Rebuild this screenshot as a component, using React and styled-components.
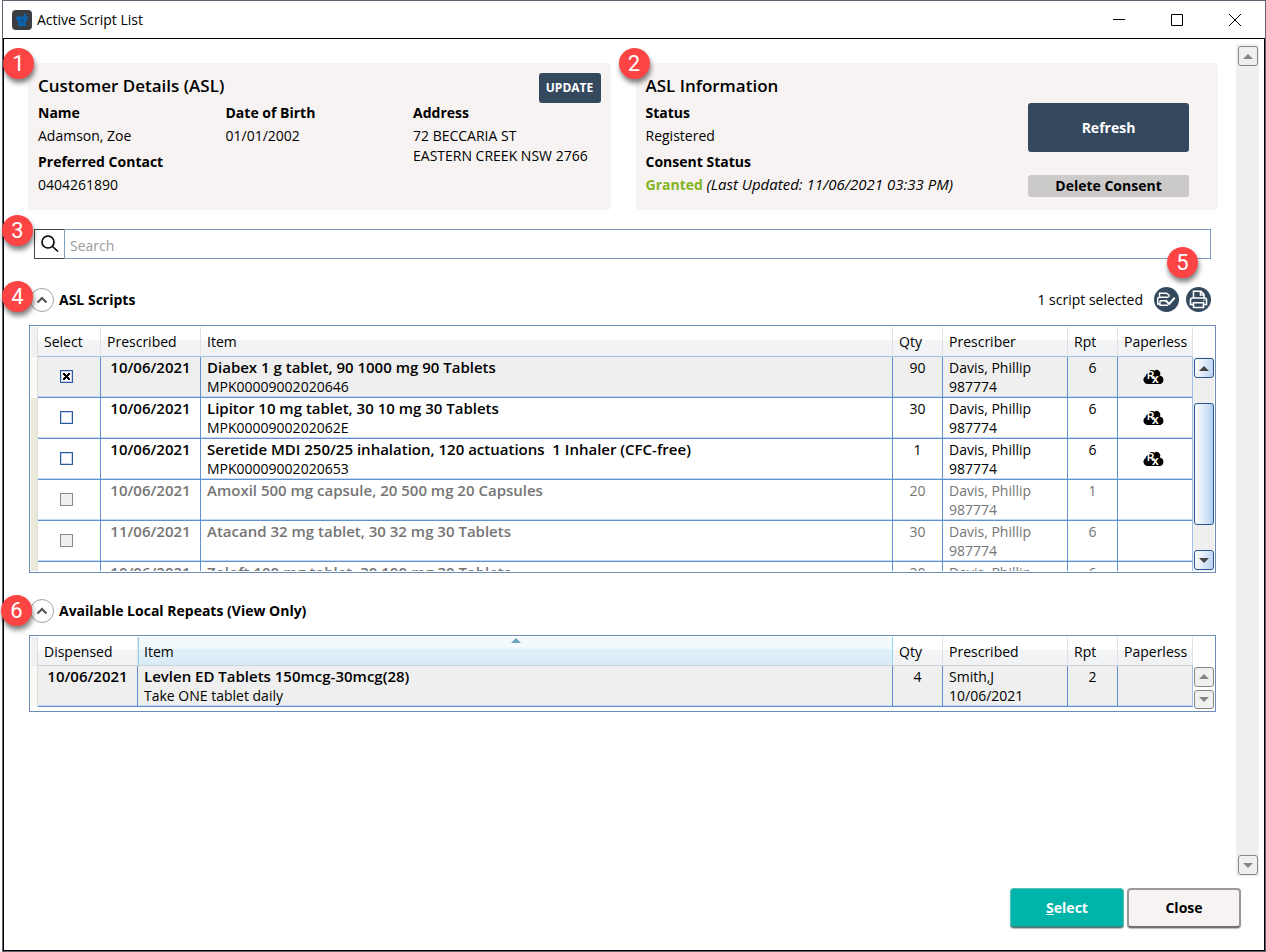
import React from "react";
import styled, { createGlobalStyle, css } from "styled-components";

const navy = "#34495e";
const line = "#6090d2";

const GlobalStyle = createGlobalStyle`
  *, *::before, *::after { box-sizing: border-box; }
  body {
    margin: 0;
    background: #fff;
    color: #000;
    font: 14px/20px "Open Sans", "Noto Sans", sans-serif;
  }
  button, input { font: inherit; color: inherit; }
  button { padding: 0; cursor: pointer; }
`;

const Window = styled.div`
  display: flex;
  flex-direction: column;
  min-height: 100vh;
  margin-left: 2px;
  border: 1px solid #5b6470;
`;

const TitleBar = styled.header`
  display: flex;
  align-items: center;
  height: 37px;
  padding: 0 1px 0 9px;
`;

const Title = styled.h1`
  flex: 1;
  margin: 0 0 0 5px;
  font-size: 14px;
  font-weight: 400;
`;

const CaptionButton = styled.button`
  display: grid;
  place-items: center;
  width: 58px;
  height: 36px;
  border: 0;
  background: none;
`;

const Frame = styled.div`
  display: flex;
  flex: 1;
  flex-direction: column;
  border: 1px solid #000;
`;

const Workspace = styled.div`
  display: flex;
  flex: 1;
  padding: 5px 5px 0 24px;
`;

const Main = styled.main`
  flex: 1;
  min-width: 0;
  padding: 19px 18px 0 0;
`;

const ScrollTrack = styled.div`
  display: flex;
  flex-direction: column;
  justify-content: space-between;
  width: 23px;
  padding: 2px 1px 1px;
  align-items: center;
  background: #efefef;
`;

const ScrollButton = styled.button`
  display: grid;
  place-items: center;
  width: 20px;
  height: 20px;
  border: 1px solid ${(p) => (p.$active ? "#2c5596" : "#858585")};
  border-radius: 3px;
  background: ${(p) =>
    p.$active ? "linear-gradient(100deg, #fff, #dfebf9 50%, #b5d0f0)" : "#f0f0f0"};
  color: ${(p) => (p.$active ? "#444" : "#858585")};
`;

const ScrollThumb = styled.div`
  width: 20px;
  height: 122px;
  margin: 25px 0;
  border: 1px solid #2c5596;
  border-radius: 3px;
  background: linear-gradient(90deg, #fafcff, #e0ecfa 45%, #b3cff0);
`;

const Badge = styled.span`
  position: absolute;
  z-index: 2;
  left: ${(p) => p.$left};
  right: ${(p) => p.$right};
  top: ${(p) => p.$top};
  width: 31px;
  height: 31px;
  border-radius: 50%;
  background: #fd4444;
  box-shadow: 1px 4px 5px rgba(0, 0, 0, 0.5);
  color: #fff;
  font: 22px/31px Roboto, "Liberation Sans", sans-serif;
  text-align: center;
`;

const Cards = styled.div`
  display: grid;
  grid-template-columns: 1fr 1fr;
  gap: 25px;
`;

const Card = styled.section`
  position: relative;
  display: flex;
  flex-direction: column;
  min-height: 147px;
  padding: 10px 10px 9px;
  border-radius: 4px;
  background: #f7f3f2;
`;

const CardHead = styled.div`
  display: flex;
  justify-content: space-between;
  height: 30px;
`;

const CardTitle = styled.h2`
  margin: 0;
  font-size: 17px;
  font-weight: 600;
  line-height: 25px;
`;

const Details = styled.div`
  display: grid;
  grid-template-columns: repeat(3, 1fr);
`;

const InfoBody = styled.div`
  display: flex;
  justify-content: space-between;
  padding-right: 19px;
`;

const Fields = styled.dl`
  margin: 0;
  white-space: nowrap;
`;

const Term = styled.dt`
  padding-bottom: 3px;
  font-weight: 700;
`;

const Value = styled.dd`
  margin: 0 0 6px;
`;

const Granted = styled.span`
  color: #84b324;
  font-weight: 700;
`;

const Stamp = styled.em`
  font-size: 15px;
  line-height: 1;
`;

const Actions = styled.div`
  display: flex;
  flex-direction: column;
  gap: 23px;
  width: 161px;
`;

const FlatButton = styled.button`
  border: 0;
  border-radius: 3px;
  height: ${(p) => p.$height};
  background: ${(p) => (p.$muted ? "#cbcac9" : navy)};
  color: ${(p) => (p.$muted ? "#000" : "#fff")};
  font-weight: 700;
`;

const UpdateButton = styled(FlatButton)`
  width: 62px;
  font-size: 12px;
`;

const SearchBar = styled.form`
  position: relative;
  display: flex;
  height: 30px;
  margin: 19px 7px 0 6px;
`;

const SearchButton = styled.button`
  display: grid;
  place-items: center;
  width: 30px;
  border: 1px solid #444;
  border-right: 0;
  background: #fff;
`;

const SearchInput = styled.input`
  flex: 1;
  min-width: 0;
  padding: 3px 5px 0;
  border: 1px solid #7c9cb9;
  border-radius: 0;
  outline: 0;
  &::placeholder { color: #9c9c9c; opacity: 1; }
`;

const SectionHead = styled.div`
  position: relative;
  display: flex;
  align-items: center;
  height: 25px;
  margin: ${(p) => p.$margin};
  padding: 0 7px 0 2px;
`;

const SectionTitle = styled.h2`
  flex: 1;
  margin: 0 0 0 5px;
  font-size: 14px;
  font-weight: 700;
`;

const Collapse = styled.button`
  display: grid;
  place-items: center;
  width: 24px;
  height: 24px;
  border: 1px solid #a3a3a3;
  border-radius: 50%;
  background: #fff;
`;

const RoundButton = styled.button`
  display: grid;
  place-items: center;
  width: 25px;
  height: 25px;
  margin-left: ${(p) => p.$gap};
  border: 0;
  border-radius: 50%;
  background: ${navy};
`;

const GridFrame = styled.div`
  display: flex;
  height: ${(p) => p.$height};
  margin: 0 2px 0 1px;
  padding: 1px;
  border: 1px solid #6b8db5;
  overflow: hidden;
`;

const GridView = styled.div`
  flex: 1;
  min-width: 0;
  overflow: hidden;
`;

const GridScroll = styled.div`
  display: flex;
  flex-direction: column;
  align-items: center;
  justify-content: ${(p) => (p.$thumb ? "space-between" : "flex-start")};
  gap: ${(p) => (p.$thumb ? "0" : "3px")};
  width: 21px;
  margin-top: ${(p) => (p.$thumb ? "30px" : "29px")};
  padding: 1px 0;
  background: ${(p) => (p.$thumb ? "#efefef" : "#fff")};
`;

const Table = styled.table`
  width: 100%;
  table-layout: fixed;
  border-collapse: separate;
  border-spacing: 0;
`;

const HeadCell = styled.th`
  position: relative;
  height: ${(p) => (p.$plain ? "29px" : "30px")};
  padding: 1px 6px 0;
  border-right: 1px solid #dfe1e4;
  border-bottom: 1px solid ${(p) => (p.$plain ? "#d0d0d4" : "#a3bfe4")};
  background: linear-gradient(#fff 45%, #f3f5f7 46%, #eff1f3);
  font-weight: 400;
  text-align: left;
  white-space: nowrap;
  ${(p) =>
    p.$sorted &&
    css`
      border-right-color: #93d6f5;
      border-left: 1px solid #93d6f5;
      padding-left: 5px;
      background: linear-gradient(#f2f9fd 42%, #e1f1f9 43%, #d8ecf6);
    `}
`;

const RowHead = styled.th`
  padding: 0;
  border-right: 1px solid #dcdcd8;
  background: ${(p) => p.$tone};
`;

const SortMark = styled.svg`
  position: absolute;
  top: 1px;
  left: 50%;
  margin-left: -5px;
`;

const Row = styled.tr`
  background: ${(p) => (p.$selected ? "#efefef" : "#fff")};
  color: ${(p) => (p.$disabled ? "#757575" : "#000")};
`;

const Cell = styled.td`
  height: 41px;
  padding: ${(p) => (p.$middle ? "0 8px 1px 6px" : "1px 6px 0")};
  border-right: 1px solid ${line};
  border-bottom: 1px solid ${line};
  box-shadow: inset 0 -1px #c4d8f2;
  text-align: ${(p) => (p.$center ? "center" : "left")};
  vertical-align: ${(p) => (p.$middle ? "middle" : "top")};
  white-space: nowrap;
  line-height: 19px;
  &:last-child { border-right-color: #a3bfe4; }
`;

const Strong = styled.div`
  font-size: 15px;
  font-weight: 600;
`;

const DateText = styled(Strong)`
  margin: 0 -4px;
`;

const CheckBox = styled.input`
  display: block;
  appearance: none;
  width: 13px;
  height: 13px;
  margin: 0 16px;
  border: 1px solid #2d59a0;
  outline: 1px solid #c5d5ee;
  outline-offset: -2px;
  background: #fff;
  &:checked {
    background:
      linear-gradient(45deg, transparent 36%, #000 36% 64%, transparent 64%) center / 7px 7px no-repeat,
      linear-gradient(-45deg, transparent 36%, #000 36% 64%, transparent 64%) center / 7px 7px no-repeat,
      #fff;
  }
  &:disabled {
    border-color: #8a8a8a;
    outline: 0;
    background: #eee;
  }
`;

const CloudIcon = styled.svg`
  display: block;
  margin: 0 auto;
`;

const Footer = styled.footer`
  display: flex;
  justify-content: flex-end;
  gap: 3px;
  padding: 12px 23px 22px;
`;

const DialogButton = styled.button`
  width: 114px;
  height: 40px;
  border: ${(p) => (p.$primary ? "1px solid #58c0b8" : "2px solid #999")};
  border-bottom: 2px solid ${(p) => (p.$primary ? "#47807c" : "#707070")};
  border-radius: 4px;
  background: ${(p) => (p.$primary ? "#00b4aa" : "#f7f3f2")};
  box-shadow: 0 1px 1px #bbb;
  color: ${(p) => (p.$primary ? "#fff" : "#000")};
  font-weight: 700;
`;

const Arrow = ({ down }) => (
  <svg width="10" height="5" viewBox="0 0 10 5" aria-hidden="true">
    <path d={down ? "M0 0h10L5 5z" : "M0 5h10L5 0z"} fill="currentColor" />
  </svg>
);

const AppIcon = () => (
  <svg width="20" height="20" viewBox="0 0 20 20" aria-hidden="true">
    <rect width="20" height="20" rx="4" fill="#3a3d42" />
    <path d="M10.500 7L13 3l1.800 1-1.800 3z" fill="#0b62a8" />
    <path d="M4 6.500h12V9h-1c0 2-.5 3.300-1.800 4.300L14.500 16h-9l1.300-2.700C5.500 12.300 5 11 5 9H4z" fill="#0b62a8" />
    <path d="M9.500 9h1.200v4H9.500zM8 10.400h4v1.200H8z" fill="#174c7c" />
  </svg>
);

const Chevron = () => (
  <svg width="12" height="8" viewBox="0 0 12 8" fill="none" aria-hidden="true">
    <path d="M1.500 6.500L6 2l4.500 4.500" stroke="#555" strokeWidth="2.200" />
  </svg>
);

const PrinterCheck = () => (
  <svg width="25" height="25" viewBox="0 0 25 25" fill="none" stroke="#fff" strokeWidth="1.400" aria-hidden="true">
    <path d="M5.500 9.700V6.200h7L15 8.200V10" />
    <path d="M14.500 10.200H5.500Q3.700 10.200 3.700 12V17H6M6 13.700H11.500M6 13.700v4.500h8" />
    <path d="M11.500 13.300l3.700 3.700 5.500-6.300" strokeWidth="2" />
  </svg>
);

const Printer = () => (
  <svg width="25" height="25" viewBox="0 0 25 25" fill="none" stroke="#fff" strokeWidth="1.600" aria-hidden="true">
    <path d="M7.500 11V4.300h7.500L18 7.300V11M14.500 4.500V8H18" />
    <path d="M7.500 17.500H4.500V13c0-1.200.8-2 2-2h12c1.200 0 2 .8 2 2v4.500h-3" />
    <path d="M7.500 15.700h10v4.800h-10z" />
    <circle cx="18" cy="13.300" r=".8" fill="#fff" stroke="none" />
  </svg>
);

const CloudRx = () => (
  <CloudIcon width="22" height="16" viewBox="0 0 22 16" role="img" aria-label="Paperless">
    <path
      d="M4.500 15A4.200 4.200 0 0 1 2.500 7.200 4 4 0 0 1 4.600 4.200 4.600 4.600 0 0 1 11.500 1.800 3.500 3.500 0 0 1 16.600 6.500 4.400 4.400 0 0 1 17.500 15z"
      fill="#000"
    />
    <text x="4" y="10" fill="#fff" fontFamily="Liberation Sans, sans-serif" fontWeight="700" fontSize="10">R</text>
    <text x="9" y="14" fill="#fff" fontFamily="Liberation Sans, sans-serif" fontWeight="700" fontSize="12">x</text>
  </CloudIcon>
);

const scripts = [
  { date: "10/06/2021", item: "Diabex 1 g tablet, 90 1000 mg 90 Tablets", code: "MPK00009002020646", qty: 90, rpt: 6, on: true },
  { date: "10/06/2021", item: "Lipitor 10 mg tablet, 30 10 mg 30 Tablets", code: "MPK0000900202062E", qty: 30, rpt: 6 },
  { date: "10/06/2021", item: "Seretide MDI 250/25 inhalation, 120 actuations\u00a0 1 Inhaler (CFC-free)", code: "MPK00009002020653", qty: 1, rpt: 6 },
  { date: "10/06/2021", item: "Amoxil 500 mg capsule, 20 500 mg 20 Capsules", qty: 20, rpt: 1, off: true },
  { date: "11/06/2021", item: "Atacand 32 mg tablet, 30 32 mg 30 Tablets", qty: 30, rpt: 6, off: true },
  { date: "10/06/2021", item: "Zoloft 100 mg tablet, 30 100 mg 30 Tablets", qty: 20, rpt: 6, off: true },
];

const Columns = ({ widths }) => (
  <colgroup>
    {widths.map((w, i) => (
      <col key={i} width={w} />
    ))}
  </colgroup>
);

export default function App() {
  return (
    <>
      <GlobalStyle />
      <Window>
        <TitleBar>
          <AppIcon />
          <Title>Active Script List</Title>
          <CaptionButton aria-label="Minimise">
            <svg width="12" height="12"><path d="M0 5.500h12" stroke="#000" /></svg>
          </CaptionButton>
          <CaptionButton aria-label="Maximise">
            <svg width="12" height="12"><path d="M.5.5h11v11H.5z" fill="none" stroke="#000" /></svg>
          </CaptionButton>
          <CaptionButton aria-label="Close window">
            <svg width="12" height="12"><path d="M0 0l12 12M12 0L0 12" stroke="#000" /></svg>
          </CaptionButton>
        </TitleBar>
        <Frame>
          <Workspace>
            <Main>
              <Cards>
                <Card>
                  <Badge $left="-25px" $top="-15px">1</Badge>
                  <CardHead>
                    <CardTitle>Customer Details (ASL)</CardTitle>
                    <UpdateButton $height="30px">UPDATE</UpdateButton>
                  </CardHead>
                  <Details>
                    <Fields>
                      <Term>Name</Term>
                      <Value>Adamson, Zoe</Value>
                      <Term>Preferred Contact</Term>
                      <Value>0404261890</Value>
                    </Fields>
                    <Fields>
                      <Term>Date of Birth</Term>
                      <Value>01/01/2002</Value>
                    </Fields>
                    <Fields>
                      <Term>Address</Term>
                      <Value>72 BECCARIA ST<br />EASTERN CREEK NSW 2766</Value>
                    </Fields>
                  </Details>
                </Card>
                <Card>
                  <Badge $left="-17px" $top="-15px">2</Badge>
                  <CardHead>
                    <CardTitle>ASL Information</CardTitle>
                  </CardHead>
                  <InfoBody>
                    <Fields>
                      <Term>Status</Term>
                      <Value>Registered</Value>
                      <Term>Consent Status</Term>
                      <Value><Granted>Granted</Granted> <Stamp>(Last Updated: 11/06/2021 03:33 PM)</Stamp></Value>
                    </Fields>
                    <Actions>
                      <FlatButton $height="49px">Refresh</FlatButton>
                      <FlatButton $height="22px" $muted>Delete Consent</FlatButton>
                    </Actions>
                  </InfoBody>
                </Card>
              </Cards>

              <SearchBar role="search" onSubmit={(e) => e.preventDefault()}>
                <Badge $left="-32px" $top="-14px">3</Badge>
                <SearchButton aria-label="Search">
                  <svg width="18" height="18" viewBox="0 0 18 18" fill="none" stroke="#000" strokeWidth="1.600">
                    <circle cx="7" cy="7" r="6" />
                    <path d="M11.500 11.500l5.500 5" />
                  </svg>
                </SearchButton>
                <SearchInput type="text" placeholder="Search" aria-label="Search scripts" />
              </SearchBar>

              <SectionHead $margin="28px 0 13px">
                <Badge $left="-26px" $top="-6px">4</Badge>
                <Badge $right="20px" $top="-40px">5</Badge>
                <Collapse aria-label="Collapse ASL scripts"><Chevron /></Collapse>
                <SectionTitle>ASL Scripts</SectionTitle>
                <span>1 script selected</span>
                <RoundButton $gap="11px" aria-label="Print selected"><PrinterCheck /></RoundButton>
                <RoundButton $gap="7px" aria-label="Print list"><Printer /></RoundButton>
              </SectionHead>
              <GridFrame $height="248px">
                <GridView>
                  <Table>
                    <Columns widths={[7, 63, 100, undefined, 50, 125, 50, 75]} />
                    <thead>
                      <tr>
                        <RowHead $tone="#f0f1f2" aria-label="Row" />
                        {["Select", "Prescribed", "Item", "Qty", "Prescriber", "Rpt", "Paperless"].map((h) => (
                          <HeadCell key={h} scope="col">{h}</HeadCell>
                        ))}
                      </tr>
                    </thead>
                    <tbody>
                      {scripts.map((s) => (
                        <Row key={s.item} $selected={s.on} $disabled={s.off}>
                          <RowHead $tone={s.on ? "#fafaf6" : "#ebe9da"} aria-label="Row" />
                          <Cell $middle>
                            <CheckBox type="checkbox" defaultChecked={s.on} disabled={s.off} aria-label={s.item} />
                          </Cell>
                          <Cell $center><DateText>{s.date}</DateText></Cell>
                          <Cell><Strong>{s.item}</Strong>{s.code}</Cell>
                          <Cell $center>{s.qty}</Cell>
                          <Cell>Davis, Phillip<br />987774</Cell>
                          <Cell $center>{s.rpt}</Cell>
                          <Cell $middle>{s.off ? null : <CloudRx />}</Cell>
                        </Row>
                      ))}
                    </tbody>
                  </Table>
                </GridView>
                <GridScroll $thumb>
                  <ScrollButton $active aria-label="Scroll scripts up"><Arrow /></ScrollButton>
                  <ScrollThumb />
                  <ScrollButton $active aria-label="Scroll scripts down"><Arrow down /></ScrollButton>
                </GridScroll>
              </GridFrame>

              <SectionHead $margin="25px 0 12px">
                <Badge $left="-27px" $top="-3px">6</Badge>
                <Collapse aria-label="Collapse local repeats"><Chevron /></Collapse>
                <SectionTitle>Available Local Repeats (View Only)</SectionTitle>
              </SectionHead>
              <GridFrame $height="77px">
                <GridView>
                  <Table>
                    <Columns widths={[7, 100, undefined, 50, 125, 50, 75]} />
                    <thead>
                      <tr>
                        <RowHead $tone="#f0f1f2" aria-label="Row" />
                        {["Dispensed", "Item", "Qty", "Prescribed", "Rpt", "Paperless"].map((h) => (
                          <HeadCell key={h} scope="col" $plain $sorted={h === "Item"}>
                            {h}
                            {h === "Item" && (
                              <SortMark width="10" height="5" aria-hidden="true">
                                <path d="M0 5L5 0l5 5z" fill="#6fa5bd" />
                              </SortMark>
                            )}
                          </HeadCell>
                        ))}
                      </tr>
                    </thead>
                    <tbody>
                      <Row $selected>
                        <RowHead $tone="#fafaf6" aria-label="Row" />
                        <Cell $center><DateText>10/06/2021</DateText></Cell>
                        <Cell><Strong>Levlen ED Tablets 150mcg-30mcg(28)</Strong>Take ONE tablet daily</Cell>
                        <Cell $center>4</Cell>
                        <Cell>Smith,J<br />10/06/2021</Cell>
                        <Cell $center>2</Cell>
                        <Cell />
                      </Row>
                    </tbody>
                  </Table>
                </GridView>
                <GridScroll>
                  <ScrollButton aria-label="Scroll repeats up"><Arrow /></ScrollButton>
                  <ScrollButton aria-label="Scroll repeats down"><Arrow down /></ScrollButton>
                </GridScroll>
              </GridFrame>
            </Main>
            <ScrollTrack>
              <ScrollButton aria-label="Scroll up"><Arrow /></ScrollButton>
              <ScrollButton aria-label="Scroll down"><Arrow down /></ScrollButton>
            </ScrollTrack>
          </Workspace>
          <Footer>
            <DialogButton $primary><u>S</u>elect</DialogButton>
            <DialogButton>Close</DialogButton>
          </Footer>
        </Frame>
      </Window>
    </>
  );
}
